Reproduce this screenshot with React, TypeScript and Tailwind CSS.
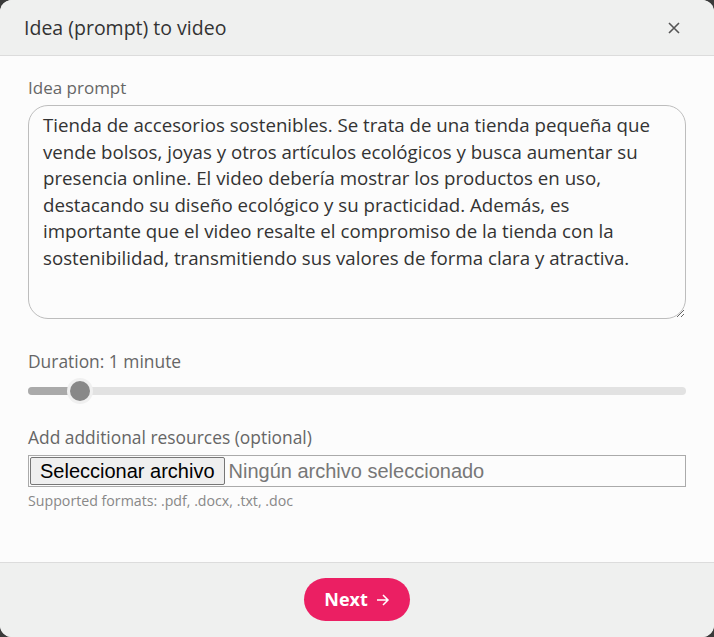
import React, { useState } from 'react';

const PROMPT =
  'Tienda de accesorios sostenibles. Se trata de una tienda pequeña que vende bolsos, joyas y otros artículos ecológicos y busca aumentar su presencia online. El video debería mostrar los productos en uso, destacando su diseño ecológico y su practicidad. Además, es importante que el video resalte el compromiso de la tienda con la sostenibilidad, transmitiendo sus valores de forma clara y atractiva.';

export default function App() {
  const [prompt, setPrompt] = useState(PROMPT);
  const [minutes] = useState(1);

  return (
    <div className="h-[637px] w-[714px] bg-[#3a3a3a] font-['Open_Sans',sans-serif]">
      <div className="flex h-full flex-col overflow-hidden rounded-[12px] bg-[#fcfcfc]">
        {/* Header */}
        <div className="flex h-[56px] items-center justify-between border-b border-[#dcdcdc] bg-[#eff0ef] pl-6 pr-[33px]">
          <h2 className="text-[19.5px] text-[#333]">Idea (prompt) to video</h2>
          <button className="text-[#555]">
            <svg width="14" height="14" viewBox="0 0 14 14" fill="none" stroke="currentColor" strokeWidth="1.6">
              <path d="M2 2L12 12M12 2L2 12" />
            </svg>
          </button>
        </div>

        {/* Body */}
        <div className="flex flex-1 flex-col px-7 pt-[20px]">
          <label className="mb-[5px] text-[17px] leading-[24px] text-[#666]">Idea prompt</label>
          <textarea
            value={prompt}
            onChange={(e) => setPrompt(e.target.value)}
            className="h-[214px] w-full resize-y rounded-[20px] border border-[#bdbdbd] bg-[#fcfcfc] px-[14px] py-[6px] text-[18.7px] leading-[26.5px] text-[#333] outline-none font-['Open_Sans',sans-serif]"
          />

          <label className="mt-[30px] text-[17.4px] leading-[24px] text-[#666]">Duration: {minutes} minute</label>
          <div className="relative mt-[14px] h-[8px] w-full rounded-full bg-[#e2e2e2]">
            <div className="h-full w-[52px] rounded-full bg-[#aaaaaa]" />
            <div className="absolute left-[42px] top-[-6px] h-[20px] w-[20px] rounded-full bg-[#888] ring-[3px] ring-[#f0f0f0]" />
          </div>

          <label className="mt-[30px] text-[17.4px] leading-[24px] text-[#666]">Add additional resources (optional)</label>
          <div className="mt-[6px] flex h-[32px] items-center border border-[#aaa] font-['Liberation_Sans',sans-serif]">
            <button className="ml-px h-[28px] rounded-[2px] border border-[#767676] bg-[#efefef] px-[9px] text-[20px] leading-none text-black">
              Seleccionar archivo
            </button>
            <span className="ml-[4px] text-[20px] leading-none text-[#777]">Ningún archivo seleccionado</span>
          </div>
          <p className="mt-[4px] text-[14.2px] leading-[20px] text-[#888]">Supported formats: .pdf, .docx, .txt, .doc</p>
        </div>

        {/* Footer */}
        <div className="flex h-[75px] items-start justify-center border-t border-[#dcdcdc] bg-[#eff0ef] pt-[15px]">
          <button className="flex h-[43px] items-center gap-2 rounded-full bg-[#eb1f63] px-[20px] text-[18px] font-bold text-white">
            Next
            <svg width="14" height="14" viewBox="0 0 14 14" fill="none" stroke="currentColor" strokeWidth="1.5">
              <path d="M1 7H12M7 2L12 7L7 12" />
            </svg>
          </button>
        </div>
      </div>
    </div>
  );
}
